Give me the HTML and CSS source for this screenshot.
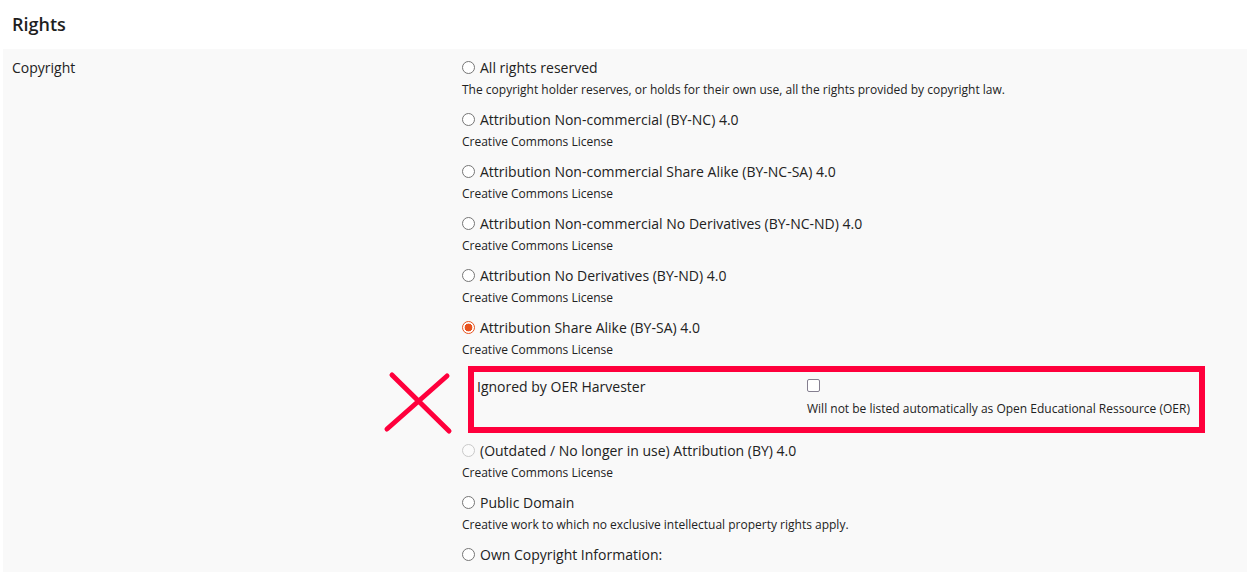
FILE: index.html
```html
<!DOCTYPE html>
<html>
<head>
<meta charset="utf-8">
<link rel="stylesheet" href="styles.css">
</head>
<body>
<div class="page">
  <h2 class="section-title">Rights</h2>
  <div class="panel">
    <div class="field-label">Copyright</div>
    <div class="options">
      <div class="option">
        <label class="opt-label"><input type="radio" name="lic" class="radio">All rights reserved</label>
        <div class="desc">The copyright holder reserves, or holds for their own use, all the rights provided by copyright law.</div>
      </div>
      <div class="option">
        <label class="opt-label"><input type="radio" name="lic" class="radio">Attribution Non-commercial (BY-NC) 4.0</label>
        <div class="desc">Creative Commons License</div>
      </div>
      <div class="option">
        <label class="opt-label"><input type="radio" name="lic" class="radio">Attribution Non-commercial Share Alike (BY-NC-SA) 4.0</label>
        <div class="desc">Creative Commons License</div>
      </div>
      <div class="option">
        <label class="opt-label"><input type="radio" name="lic" class="radio">Attribution Non-commercial No Derivatives (BY-NC-ND) 4.0</label>
        <div class="desc">Creative Commons License</div>
      </div>
      <div class="option">
        <label class="opt-label"><input type="radio" name="lic" class="radio">Attribution No Derivatives (BY-ND) 4.0</label>
        <div class="desc">Creative Commons License</div>
      </div>
      <div class="option">
        <label class="opt-label"><input type="radio" name="lic" class="radio" checked>Attribution Share Alike (BY-SA) 4.0</label>
        <div class="desc">Creative Commons License</div>
      </div>
      <div class="highlight">
        <svg class="cross" width="70" height="66" viewBox="0 0 70 66" aria-hidden="true">
          <line x1="9" y1="5" x2="66" y2="61" />
          <line x1="64" y1="6" x2="4" y2="59" />
        </svg>
        <div class="sub-label">Ignored by OER Harvester</div>
        <div class="sub-control">
          <input type="checkbox" class="check">
          <div class="desc">Will not be listed automatically as Open Educational Ressource (OER)</div>
        </div>
      </div>
      <div class="option">
        <label class="opt-label"><input type="radio" name="lic" class="radio" disabled>(Outdated / No longer in use) Attribution (BY) 4.0</label>
        <div class="desc">Creative Commons License</div>
      </div>
      <div class="option">
        <label class="opt-label"><input type="radio" name="lic" class="radio">Public Domain</label>
        <div class="desc">Creative work to which no exclusive intellectual property rights apply.</div>
      </div>
      <div class="option">
        <label class="opt-label"><input type="radio" name="lic" class="radio">Own Copyright Information:</label>
      </div>
    </div>
  </div>
</div>
</body>
</html>
```

FILE: styles.css
```css
html, body {
  margin: 0;
  padding: 0;
  background: #ffffff;
  font-family: "Open Sans", "Noto Sans", sans-serif;
  color: #222222;
  overflow: hidden;
}

.page {
  padding-left: 3px;
}

.section-title {
  margin: 0;
  padding: 12px 9px 13px;
  font-size: 18px;
  line-height: 24px;
  font-weight: 600;
  color: #1e1e1e;
}

.panel {
  background: #f9f9f9;
  display: grid;
  grid-template-columns: 450px 1fr;
  padding: 8px 0 40px 9px;
  min-height: 600px;
}

.field-label {
  font-size: 14px;
  line-height: 21px;
}

.options {
  display: flex;
  flex-direction: column;
}

.option {
  margin-bottom: 11px;
}

.opt-label {
  display: flex;
  align-items: center;
  font-size: 14px;
  line-height: 21px;
  color: #222222;
}

.radio {
  appearance: none;
  -webkit-appearance: none;
  width: 13px;
  height: 13px;
  margin: 0 5px 0 0;
  border: 1px solid #767676;
  border-radius: 50%;
  background: #ffffff;
  box-sizing: border-box;
  flex: none;
}

.radio:checked {
  border: 1.5px solid #e8531f;
  background: radial-gradient(circle, #e8531f 0 3.6px, #ffffff 4.2px);
}

.radio:disabled {
  border-color: #c9c9c9;
  background: #fbfbfb;
}

.desc {
  font-size: 12px;
  line-height: 16px;
  margin-top: 4px;
  color: #222222;
}

.highlight {
  position: relative;
  display: grid;
  grid-template-columns: 330px 1fr;
  margin: -3px 0 7px 6px;
  padding: 4px 0 10px 3px;
  box-sizing: border-box;
  width: 737px;
  border: 6px solid #ff003c;
}

.cross {
  position: absolute;
  left: -91px;
  top: -2px;
  overflow: visible;
}

.cross line {
  stroke: #ff003c;
  stroke-width: 5;
  stroke-linecap: round;
}

.sub-label {
  font-size: 14px;
  line-height: 21px;
}

.sub-control {
  display: flex;
  flex-direction: column;
  align-items: flex-start;
  padding-top: 3px;
}

.check {
  appearance: none;
  -webkit-appearance: none;
  width: 13px;
  height: 13px;
  margin: 0 0 5px 0;
  border: 1px solid #857f90;
  border-radius: 2px;
  background: #ffffff;
  box-sizing: border-box;
}
```
